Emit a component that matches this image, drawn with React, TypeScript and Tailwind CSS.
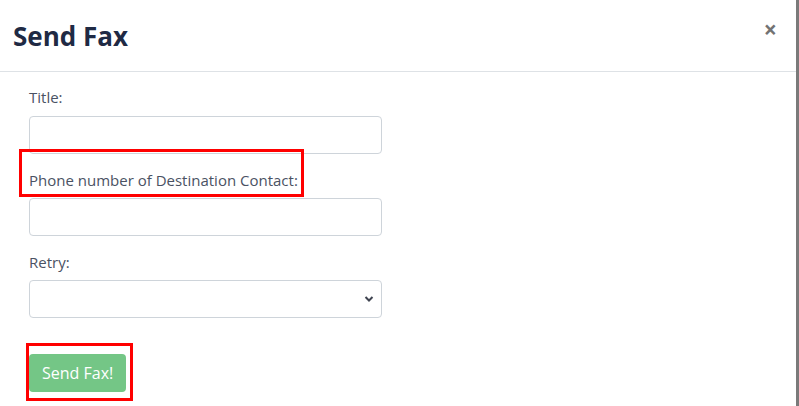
import React from "react";

const App: React.FC = () => {
  return (
    <div className="flex h-[406px] w-[799px] overflow-hidden bg-white font-['Open_Sans',_'Noto_Sans',_sans-serif]">
      <div className="flex-1 flex flex-col">
        {/* Header */}
        <div className="flex h-[72px] items-start justify-between border-b border-[#dee2e6] pl-[13px] pr-[19px]">
          <h2 className="mt-[17px] text-[26px] font-bold leading-[38px] text-[#1f2a44]">Send Fax</h2>
          <button className="mt-[13px] text-[23px] font-bold leading-[32px] text-[#737373]">×</button>
        </div>

        {/* Body */}
        <div className="flex flex-col pl-[29px] pt-[15px]">
          <label className="mb-[8px] text-[15px] leading-[21px] text-[#4a5263]">Title:</label>
          <input className="h-[38px] w-[353px] rounded-[4px] border border-[#ced4da] bg-white" />

          <div className="relative mt-[16px] mb-[7px]">
            <label className="block text-[15px] leading-[21px] text-[#4a5263]">Phone number of Destination Contact:</label>
            <div className="pointer-events-none absolute left-[-10px] top-[-21px] h-[48px] w-[285px] border-[3px] border-[#ff0000]" />
          </div>
          <input className="h-[38px] w-[353px] rounded-[4px] border border-[#ced4da] bg-white" />

          <label className="mt-[16px] mb-[7px] text-[15px] leading-[21px] text-[#4a5263]">Retry:</label>
          <div className="relative h-[38px] w-[353px] rounded-[4px] border border-[#ced4da] bg-white">
            <svg className="absolute right-[7px] top-[14px]" width="10" height="8" viewBox="0 0 10 8">
              <path d="M1.5 2 L5 5.5 L8.5 2" fill="none" stroke="#3f4450" strokeWidth="2" />
            </svg>
          </div>

          <div className="relative mt-[36px] self-start">
            <button className="block h-[38px] rounded-[4px] bg-[#74c686] px-[13px] text-[16px] text-white">Send Fax!</button>
            <div className="pointer-events-none absolute left-[-3px] top-[-11px] h-[58px] w-[107px] border-[3px] border-[#ff0000]" />
          </div>
        </div>
      </div>
      <div className="w-[3px] bg-[#7a7a7a]" />
    </div>
  );
};

export default App;
